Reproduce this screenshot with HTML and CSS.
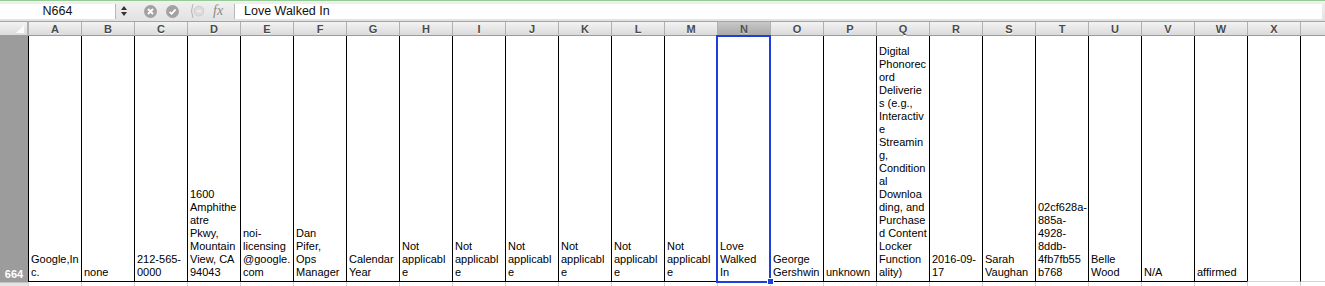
FILE: index.html
```html
<!DOCTYPE html>
<html>
  <head>
    <title>Sheet - row 664</title>
    <link rel="stylesheet" href="styles.css">
  </head>

  <body>
    <div class="top-line"></div>

    <div class="formula-bar">
      <div class="name-box">N664</div>
      <div class="spinner">
        <svg width="8" height="12" viewBox="0 0 8 12">
          <path d="M4 1 L7 5 L1 5 Z" fill="#333" />
          <path d="M4 11 L7 7 L1 7 Z" fill="#333" />
        </svg>
      </div>
      <div class="fx-buttons">
        <svg width="13" height="13" viewBox="0 0 13 13">
          <circle cx="6.5" cy="6.5" r="6.5" fill="#a2a2a2" />
          <path d="M4 4 L9 9 M9 4 L4 9" stroke="#fff" stroke-width="1.8" />
        </svg>
        <svg width="13" height="13" viewBox="0 0 13 13">
          <circle cx="6.5" cy="6.5" r="6.5" fill="#a2a2a2" />
          <path d="M3.6 6.8 L5.7 8.8 L9.6 4.3" stroke="#fff" stroke-width="1.8" fill="none" />
        </svg>
        <svg class="equal-btn" width="14" height="16" viewBox="0 0 14 16">
          <path d="M3 1 Q0 8 3 15" stroke="#b4b4b4" stroke-width="1" fill="none" />
          <circle cx="9" cy="8" r="5" fill="#dcdcdc" stroke="#c8c8c8" stroke-width="0.8" />
          <path d="M6.8 8 L11.2 8" stroke="#f4f4f4" stroke-width="1.4" />
        </svg>
        <span class="fx">fx</span>
      </div>
      <div class="formula-input">Love Walked In</div>
    </div>

    <div class="sheet">
      <div class="corner"><span class="corner-mark"></span></div>
      <div class="col-head">A</div>
      <div class="col-head">B</div>
      <div class="col-head">C</div>
      <div class="col-head">D</div>
      <div class="col-head">E</div>
      <div class="col-head">F</div>
      <div class="col-head">G</div>
      <div class="col-head">H</div>
      <div class="col-head">I</div>
      <div class="col-head">J</div>
      <div class="col-head">K</div>
      <div class="col-head">L</div>
      <div class="col-head">M</div>
      <div class="col-head selected">N</div>
      <div class="col-head">O</div>
      <div class="col-head">P</div>
      <div class="col-head">Q</div>
      <div class="col-head">R</div>
      <div class="col-head">S</div>
      <div class="col-head">T</div>
      <div class="col-head">U</div>
      <div class="col-head">V</div>
      <div class="col-head">W</div>
      <div class="col-head">X</div>
      <div class="col-head"></div>

      <div class="row-head">664</div>
      <div class="cell">Google,In<br>c.</div>
      <div class="cell">none</div>
      <div class="cell">212-565-<br>0000</div>
      <div class="cell">1600<br>Amphithe<br>atre<br>Pkwy,<br>Mountain<br>View, CA<br>94043</div>
      <div class="cell">noi-<br>licensing<br>@google.<br>com</div>
      <div class="cell">Dan<br>Pifer,<br>Ops<br>Manager</div>
      <div class="cell">Calendar<br>Year</div>
      <div class="cell">Not<br>applicabl<br>e</div>
      <div class="cell">Not<br>applicabl<br>e</div>
      <div class="cell">Not<br>applicabl<br>e</div>
      <div class="cell">Not<br>applicabl<br>e</div>
      <div class="cell">Not<br>applicabl<br>e</div>
      <div class="cell">Not<br>applicabl<br>e</div>
      <div class="cell active">Love<br>Walked<br>In<span class="handle"></span></div>
      <div class="cell">George<br>Gershwin</div>
      <div class="cell">unknown</div>
      <div class="cell">Digital<br>Phonorec<br>ord<br>Deliverie<br>s (e.g.,<br>Interactiv<br>e<br>Streamin<br>g,<br>Condition<br>al<br>Downloa<br>ding, and<br>Purchase<br>d Content<br>Locker<br>Function<br>ality)</div>
      <div class="cell">2016-09-<br>17</div>
      <div class="cell">Sarah<br>Vaughan</div>
      <div class="cell">02cf628a-<br>885a-<br>4928-<br>8ddb-<br>4fb7fb55<br>b768</div>
      <div class="cell">Belle<br>Wood</div>
      <div class="cell">N/A</div>
      <div class="cell">affirmed</div>
      <div class="cell plain"></div>
      <div class="cell plain"></div>

      <div class="row-head next"></div>
      <div class="cell next"></div>
      <div class="cell next"></div>
      <div class="cell next"></div>
      <div class="cell next"></div>
      <div class="cell next"></div>
      <div class="cell next"></div>
      <div class="cell next"></div>
      <div class="cell next"></div>
      <div class="cell next"></div>
      <div class="cell next"></div>
      <div class="cell next"></div>
      <div class="cell next"></div>
      <div class="cell next"></div>
      <div class="cell next"></div>
      <div class="cell next"></div>
      <div class="cell next"></div>
      <div class="cell next"></div>
      <div class="cell next"></div>
      <div class="cell next"></div>
      <div class="cell next"></div>
      <div class="cell next"></div>
      <div class="cell next"></div>
      <div class="cell next"></div>
      <div class="cell next"></div>
      <div class="cell next"></div>
    </div>
  </body>
</html>
```

FILE: styles.css
```css
body {
  margin: 0;
  font-family: "Liberation Sans", Arial, sans-serif;
  background: #fff;
  overflow: hidden;
}

.top-line {
  height: 1px;
  background: #93cd93;
}

.formula-bar {
  display: flex;
  align-items: center;
  height: 20px;
  background: linear-gradient(#f0f0f0, #e2e2e2);
  border-bottom: 1px solid #a5a5a5;
}

.name-box {
  width: 115px;
  height: 15px;
  background: #fff;
  border-right: 1px solid #b8b8b8;
  font-size: 12.5px;
  line-height: 15px;
  text-align: center;
  color: #111;
}

.spinner {
  display: flex;
  align-items: center;
  justify-content: center;
  width: 16px;
  height: 20px;
}

.fx-buttons {
  display: flex;
  align-items: center;
  gap: 9px;
  padding-left: 12px;
  width: 90px;
  height: 20px;
}

.equal-btn {
  margin-left: 2px;
}

.fx {
  font-family: "Liberation Serif", serif;
  font-style: italic;
  font-size: 14px;
  color: #8a8a8a;
}

.formula-input {
  flex: 1;
  height: 15px;
  margin-right: 3px;
  background: #fff;
  border-left: 1px solid #b8b8b8;
  padding-left: 9px;
  font-size: 12.5px;
  line-height: 15px;
  color: #111;
}

.sheet {
  display: grid;
  grid-template-columns: 28px repeat(24, 53px) 1fr;
  grid-template-rows: 14px 246px 10px;
}

.corner {
  position: relative;
  background: linear-gradient(#f3f3f3, #dcdcdc);
  border-bottom: 1px solid #9c9c9c;
  border-right: 1px solid #b0b0b0;
  box-sizing: border-box;
}

.corner-mark {
  position: absolute;
  right: 3px;
  bottom: 2px;
  width: 0;
  height: 0;
  border-left: 8px solid transparent;
  border-bottom: 8px solid #fbfbfb;
}

.col-head {
  display: flex;
  align-items: center;
  justify-content: center;
  background: linear-gradient(#f3f3f3, #dadada);
  border-bottom: 1px solid #9c9c9c;
  border-left: 1px solid #b0b0b0;
  font-size: 11px;
  font-weight: bold;
  color: #4a4a4a;
  text-shadow: 0 1px 0 #fff;
}

.col-head.selected {
  background: linear-gradient(#c8c8c8, #a9a9a9);
  color: #505050;
  text-shadow: 0 1px 0 #d8d8d8;
}

.row-head {
  display: flex;
  align-items: flex-end;
  justify-content: center;
  padding-bottom: 1px;
  background: #9c9c9c;
  font-size: 11px;
  font-weight: bold;
  color: #fff;
  line-height: 13px;
}

.row-head.next {
  background: #e4e4e4;
  border-top: 1px solid #c4c4c4;
}

.cell {
  position: relative;
  display: flex;
  flex-direction: column;
  justify-content: flex-end;
  padding: 0 0 2px 2px;
  border-left: 1px solid #000;
  border-bottom: 1px solid #000;
  font-size: 11px;
  line-height: 13px;
  color: #000;
  white-space: nowrap;
  overflow: hidden;
}

.cell.plain {
  border-bottom: 1px solid #d4d4d4;
}

.cell.plain:last-of-type {
  border-left-color: #d0d0d0;
}

.cell.next {
  border-left: 1px solid #d4d4d4;
  border-bottom: none;
}

.cell.active {
  overflow: visible;
  outline: 2px solid #1f3fdc;
  outline-offset: -1px;
  z-index: 1;
}

.handle {
  position: absolute;
  right: -4px;
  bottom: -4px;
  width: 5px;
  height: 5px;
  background: #1f3fdc;
  border: 1px solid #fff;
}
```
